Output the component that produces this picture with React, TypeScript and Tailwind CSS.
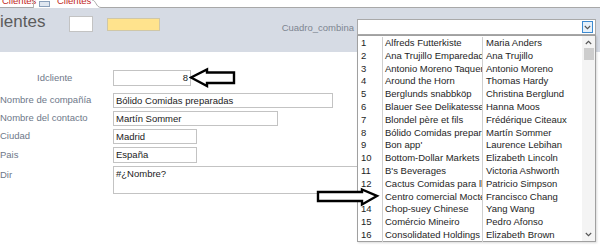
import React from "react";

const clientes: [string, string][] = [
	["Alfreds Futterkiste", "Maria Anders"],
	["Ana Trujillo Emparedados y helados", "Ana Trujillo"],
	["Antonio Moreno Taquería", "Antonio Moreno"],
	["Around the Horn", "Thomas Hardy"],
	["Berglunds snabbköp", "Christina Berglund"],
	["Blauer See Delikatessen", "Hanna Moos"],
	["Blondel père et fils", "Frédérique Citeaux"],
	["Bólido Comidas preparadas", "Martín Sommer"],
	["Bon app'", "Laurence Lebihan"],
	["Bottom-Dollar Markets", "Elizabeth Lincoln"],
	["B's Beverages", "Victoria Ashworth"],
	["Cactus Comidas para llevar", "Patricio Simpson"],
	["Centro comercial Moctezuma", "Francisco Chang"],
	["Chop-suey Chinese", "Yang Wang"],
	["Comércio Mineiro", "Pedro Afonso"],
	["Consolidated Holdings", "Elizabeth Brown"],
];

function Chevron({ up = false }: { up?: boolean }) {
	return (
		<svg width="7" height="5" viewBox="0 0 7 5" className={up ? "rotate-180" : ""}>
			<path d="M0.8 1 L3.5 3.7 L6.2 1" fill="none" stroke="#555" strokeWidth="1.1" />
		</svg>
	);
}

function Field({
	label,
	value,
	width,
	height = "h-[15px]",
	labelClass = "",
	multiline = false,
	right = false,
	className = "",
}: {
	label: string;
	value: string;
	width: string;
	height?: string;
	labelClass?: string;
	multiline?: boolean;
	right?: boolean;
	className?: string;
}) {
	return (
		<div className={`flex ${multiline ? "items-start" : "items-center"} ${className}`}>
			<div className={`w-[113px] shrink-0 text-[9.5px] text-[#6e7889] whitespace-nowrap ${labelClass}`}>
				{label}
			</div>
			<div
				className={`${width} ${height} shrink-0 border border-[#c3c3c3] bg-white px-[2px] text-[9.5px] leading-[13px] text-[#1b1b1b] ${
					right ? "text-right" : ""
				}`}
			>
				{value}
			</div>
		</div>
	);
}

export default function App() {
	return (
		<div className="relative w-[600px] h-[252px] overflow-hidden bg-white font-['Liberation_Sans',Arial,sans-serif]">
			{/* pestañas */}
			<div className="flex h-[8px] overflow-hidden bg-white">
				<div className="flex items-start pl-[2px] w-[33px] border-b border-[#a8a8a8]">
					<span className="mt-[-4px] text-[9.5px] leading-[10px] text-[#c0271c]">Clientes</span>
				</div>
				<div className="w-px bg-[#b5b5b5]" />
				<div className="flex items-start">
					<div className="ml-[5px] mt-[1px] w-[11px] h-[6px] border border-[#8aa0bb] bg-[#dfe7f1]" />
					<span className="ml-[7px] mt-[-4px] text-[9.5px] leading-[10px] text-[#c0271c]">Clientes</span>
				</div>
				<svg width="9" height="8" viewBox="0 0 9 8" className="ml-[1px] shrink-0">
					<path d="M0 0 C4 0 4 7.5 9 7.5" fill="none" stroke="#a8a8a8" strokeWidth="1" />
				</svg>
				<div className="flex-1 border-b border-[#a8a8a8]" />
			</div>

			{/* encabezado */}
			<div className="relative z-10 flex items-start h-[44px] bg-[#d6dbe4]">
				<div className="w-[46px] overflow-hidden shrink-0">
					<div className="ml-[-16px] mt-[4px] text-[17px] leading-[20px] text-[#5c5c5c] whitespace-nowrap">
						Clientes
					</div>
				</div>
				<div className="ml-[23px] mt-[8px] w-[24px] h-[16px] bg-white border border-[#c3c3c3]" />
				<div className="ml-[14px] mt-[10px] w-[53px] h-[13px] bg-[#ffe38d] border border-[#cfc7a8]" />
				<div className="ml-auto mt-[12px] mr-[3px] text-[9.5px] leading-[16px] text-[#7d8590]">Cuadro_combina</div>
				<div className="relative mt-[11px] mr-[4px] w-[239px]">
					<div className="flex items-center justify-end h-[16px] bg-white border border-[#a9a9a9] pr-[2px]">
						<div className="flex items-center justify-center w-[11px] h-[12px] border border-[#3d8ad0] bg-[#e6f1fb]">
							<Chevron />
						</div>
					</div>
					{/* lista desplegable */}
					<div className="absolute left-0 top-full flex w-[239px] h-[207px] bg-white border border-[#a0a0a0] shadow-[1px_1px_2px_rgba(0,0,0,0.15)]">
						<div className="flex flex-col pt-[1px]">
							{clientes.map(([empresa, contacto], i) => (
								<div key={i} className="flex h-[12.8px] text-[9.5px] leading-[12.8px] text-[#1e1e1e]">
									<div className="w-[25px] pl-[3px] border-r border-[#cfcfcf]">{i + 1}</div>
									<div className="w-[100px] pl-[2px] border-r border-[#cfcfcf] overflow-hidden whitespace-nowrap">
										{empresa}
									</div>
									<div className="w-[98px] pl-[3px] overflow-hidden whitespace-nowrap">{contacto}</div>
								</div>
							))}
						</div>
						<div className="flex flex-col items-center w-[13px] ml-auto bg-[#f4f4f4]">
							<div className="mt-[4px]">
								<Chevron up />
							</div>
							<div className="mt-[3px] w-[10px] h-[12px] bg-[#cdcdcd]" />
							<div className="mt-auto mb-[4px]">
								<Chevron />
							</div>
						</div>
					</div>
				</div>
			</div>

			{/* formulario */}
			<div className="flex flex-col pt-[18px]">
				<Field label="Idcliente" value="8" width="w-[78px]" height="h-[16px]" labelClass="pl-[37px]" right />
				<Field label="Nombre de compañía" value="Bólido Comidas preparadas" width="w-[220px]" className="mt-[7px]" />
				<Field label="Nombre del contacto" value="Martín Sommer" width="w-[165px]" className="mt-[3px]" />
				<Field label="Ciudad" value="Madrid" width="w-[84px]" className="mt-[3px]" />
				<Field label="Pais" value="España" width="w-[84px]" height="h-[16px]" className="mt-[3px]" />
				<Field
					label="Dir"
					value="#¿Nombre?"
					width="w-[300px]"
					height="h-[28px]"
					labelClass="pt-[2px]"
					multiline
					className="mt-[3px]"
				/>
			</div>

			{/* flechas */}
			<svg width="48" height="22" viewBox="0 0 48 22" className="absolute left-[189px] top-[67px] z-20">
				<path d="M2 10.5 L18 2.5 L18 5.5 L45 5.5 L45 16 L18 16 L18 19 Z" fill="white" stroke="black" strokeWidth="2.4" strokeLinejoin="miter" />
			</svg>
			<svg width="66" height="22" viewBox="0 0 66 22" className="absolute left-[315px] top-[186px] z-20">
				<path d="M3 6 L47 6 L47 3.5 L62 10 L47 18.5 L47 15 L3 15 Z" fill="white" stroke="black" strokeWidth="2.4" strokeLinejoin="miter" />
			</svg>
		</div>
	);
}
